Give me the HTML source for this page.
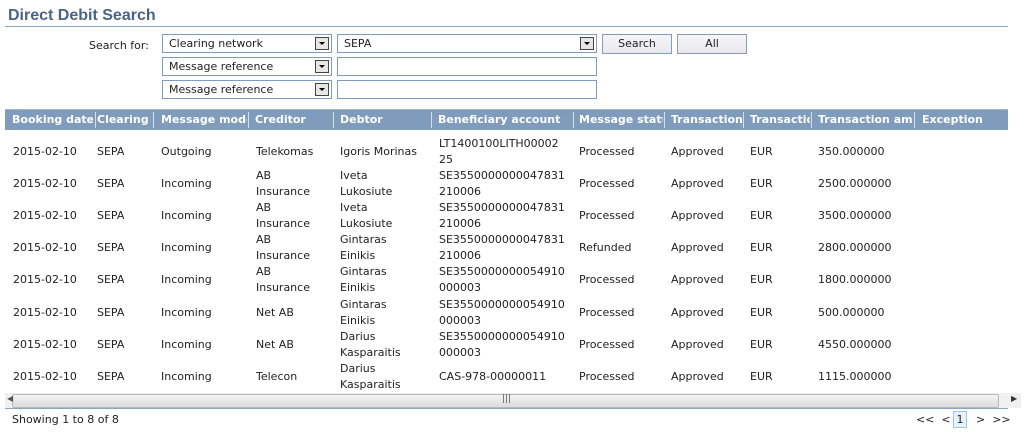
<!DOCTYPE html><html><head><style>
body{margin:0;width:1027px;height:436px;background:#fff;font-family:"DejaVu Sans","Liberation Sans",sans-serif;font-size:11px;color:#222;position:relative;overflow:hidden}
.a{position:absolute;white-space:nowrap}
.sel{position:absolute;height:19px;border:1px solid #7f9cbc;background:#fff;box-sizing:border-box;padding:2px 6px;line-height:14px}
.arr{position:absolute;right:2px;top:2px;width:14px;height:13px;border:1px solid #444;background:#e6e6e6;box-sizing:border-box}
.arr:after{content:"";position:absolute;left:3px;top:4px;border-left:3px solid transparent;border-right:3px solid transparent;border-top:3px solid #000}
.btn{position:absolute;height:20px;border:1px solid #7f9cbc;background:linear-gradient(#f6f6f8,#e8e8ee);box-sizing:border-box;text-align:center;line-height:18px}
.hd{position:absolute;top:109px;left:5px;width:1003px;height:21px;background:#7f9cbc;border-top:1px solid #9fb5cc;box-sizing:border-box}
.h{position:absolute;top:113px;color:#fff;font-weight:bold;white-space:nowrap;overflow:hidden}
.sp{position:absolute;top:112px;width:1px;height:16px;background:#d6e0ea}
.c{position:absolute;white-space:nowrap;line-height:16px}
</style></head><body>
<div class="a" style="left:8px;top:7px;font-family:'Liberation Sans',sans-serif;font-weight:bold;font-size:16px;color:#4a6384">Direct Debit Search</div>
<div class="a" style="left:5px;top:26px;width:1003px;height:1px;background:#8ca6c0"></div>
<div class="a" style="left:89px;top:39px">Search for:</div>
<div class="sel" style="left:162px;top:34px;width:170px">Clearing network<div class="arr"></div></div>
<div class="sel" style="left:337px;top:34px;width:260px">SEPA<div class="arr"></div></div>
<div class="btn" style="left:602px;top:34px;width:70px">Search</div>
<div class="btn" style="left:677px;top:34px;width:70px">All</div>
<div class="sel" style="left:162px;top:57px;width:170px">Message reference<div class="arr"></div></div>
<div class="sel" style="left:337px;top:57px;width:260px"></div>
<div class="sel" style="left:162px;top:80px;width:170px">Message reference<div class="arr"></div></div>
<div class="sel" style="left:337px;top:80px;width:260px"></div>
<div class="hd"></div>
<div class="h" style="left:12px;width:81px">Booking date</div><div class="sp" style="left:95px"></div>
<div class="h" style="left:97px;width:55px">Clearing</div><div class="sp" style="left:153px"></div>
<div class="h" style="left:161px;width:86px">Message mode</div><div class="sp" style="left:248px"></div>
<div class="h" style="left:255px">Creditor</div><div class="sp" style="left:333px"></div>
<div class="h" style="left:340px">Debtor</div><div class="sp" style="left:431px"></div>
<div class="h" style="left:438px;width:134px">Beneficiary account</div><div class="sp" style="left:573px"></div>
<div class="h" style="left:579px;width:84px">Message status</div><div class="sp" style="left:664px"></div>
<div class="h" style="left:671px;width:72px">Transaction</div><div class="sp" style="left:743px"></div>
<div class="h" style="left:750px;width:60px">Transaction</div><div class="sp" style="left:811px"></div>
<div class="h" style="left:818px;width:95px">Transaction amount</div><div class="sp" style="left:914px"></div>
<div class="h" style="left:922px">Exception</div>
<div id="rows"></div>
<script>
var d=[["Outgoing","Telekomas","Igoris Morinas","LT1400100LITH00002<br>25","Processed","350.000000"],
["Incoming","AB<br>Insurance","Iveta<br>Lukosiute","SE3550000000047831<br>210006","Processed","2500.000000"],
["Incoming","AB<br>Insurance","Iveta<br>Lukosiute","SE3550000000047831<br>210006","Processed","3500.000000"],
["Incoming","AB<br>Insurance","Gintaras<br>Einikis","SE3550000000047831<br>210006","Refunded","2800.000000"],
["Incoming","AB<br>Insurance","Gintaras<br>Einikis","SE3550000000054910<br>000003","Processed","1800.000000"],
["Incoming","Net AB","Gintaras<br>Einikis","SE3550000000054910<br>000003","Processed","500.000000"],
["Incoming","Net AB","Darius<br>Kasparaitis","SE3550000000054910<br>000003","Processed","4550.000000"],
["Incoming","Telecon","Darius<br>Kasparaitis","CAS-978-00000011","Processed","1115.000000"]];
var h="";d.forEach(function(r,i){var cy=152+i*32.1;
function c(x,t){var two=t.indexOf("<br>")>=0;h+='<div class="c" style="left:'+x+'px;top:'+(cy-(two?16:8))+'px">'+t+'</div>';}
c(13,"2015-02-10");c(97,"SEPA");c(161,r[0]);c(256,r[1]);c(340,r[2]);c(439,r[3]);c(579,r[4]);c(671,"Approved");c(750,"EUR");c(818,r[5]);});
document.getElementById("rows").innerHTML=h;
</script>
<div class="a" style="left:5px;top:393px;width:1016px;height:15px;background:#f0f0f0"></div>
<div class="a" style="left:12px;top:394px;width:985px;height:12px;border:1px solid #b8b8b8;border-radius:2px;background:linear-gradient(#f4f4f4,#dcdcdc)"></div>
<div class="a" style="left:7px;top:394px;font-size:8px;color:#555">&#9664;</div>
<div class="a" style="left:1011px;top:394px;font-size:8px;color:#333">&#9654;</div>
<div class="a" style="left:502px;top:394px;font-size:9px;color:#555">|||</div>
<div class="a" style="left:5px;top:408px;width:1003px;height:1px;background:#8ca6c0"></div>
<div class="a" style="left:12px;top:413px">Showing 1 to 8 of 8</div>
<div class="a" style="left:916px;top:413px">&lt;&lt; &nbsp;&lt;</div>
<div class="a" style="left:953px;top:411px;width:14px;height:17px;border:1px solid #9cc8e0;background:#e8f2fa;box-sizing:border-box;text-align:center;line-height:15px">1</div>
<div class="a" style="left:976px;top:413px">&gt; &nbsp;&gt;&gt;</div>
</body></html>
